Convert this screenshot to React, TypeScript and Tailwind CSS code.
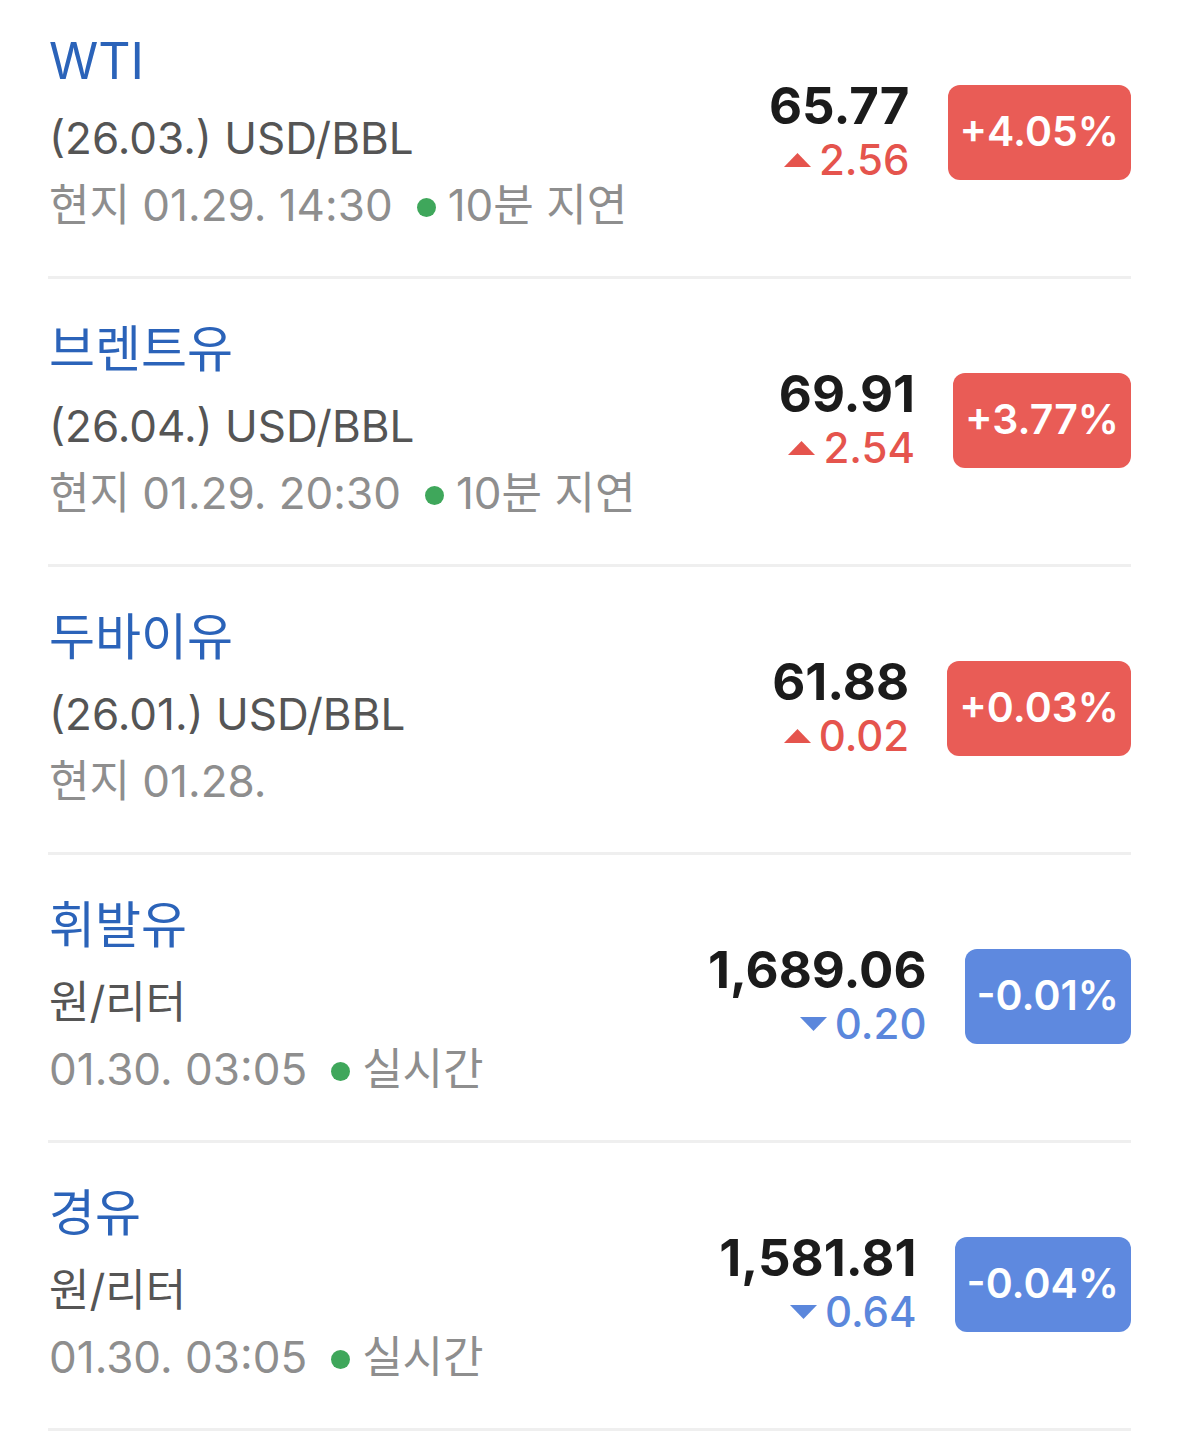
import React from "react";

type Item = {
  name: string;
  unit: string;
  time: string;
  status?: string;
  price: string;
  change: string;
  pct: string;
  up: boolean;
};

const items: Item[] = [
  { name: "WTI", unit: "(26.03.) USD/BBL", time: "현지 01.29. 14:30", status: "10분 지연", price: "65.77", change: "2.56", pct: "+4.05%", up: true },
  { name: "브렌트유", unit: "(26.04.) USD/BBL", time: "현지 01.29. 20:30", status: "10분 지연", price: "69.91", change: "2.54", pct: "+3.77%", up: true },
  { name: "두바이유", unit: "(26.01.) USD/BBL", time: "현지 01.28.", price: "61.88", change: "0.02", pct: "+0.03%", up: true },
  { name: "휘발유", unit: "원/리터", time: "01.30. 03:05", status: "실시간", price: "1,689.06", change: "0.20", pct: "-0.01%", up: false },
  { name: "경유", unit: "원/리터", time: "01.30. 03:05", status: "실시간", price: "1,581.81", change: "0.64", pct: "-0.04%", up: false },
];

function Row({ it }: { it: Item }) {
  return (
    <div className="flex items-center justify-between pt-[34px] pb-[37px] border-b-[3px] border-[#efefef]">
      <div className="flex flex-col pl-[1px]">
        <div className="text-[50px] leading-[72px] text-[#2b63b9]">{it.name}</div>
        <div className="mt-[8px] text-[44px] leading-[67px] text-[#555555]">{it.unit}</div>
        <div className="flex items-center text-[44px] leading-[67px] text-[#8e8e8e]">
          <span>{it.time}</span>
          {it.status && (
            <>
              <span className="ml-[24px] mr-[12px] mt-[4px] inline-block w-[19px] h-[19px] rounded-full bg-[#3fa75b]" />
              <span>{it.status}</span>
            </>
          )}
        </div>
      </div>
      <div className="flex items-center gap-[38px]">
        <div className="flex flex-col items-end">
          <div className="text-[51px] leading-[56px] font-bold text-[#1b1b1b]">{it.price}</div>
          <div className={`flex items-center text-[42px] leading-[52px] font-medium ${it.up ? "text-[#e5544d]" : "text-[#5b87dc]"}`}>
            <svg width="27" height="16" viewBox="0 0 27 16" className="mr-[8px]">
              {it.up ? (
                <polygon points="13.5,1 27,15 0,15" fill={"#e5544d"} />
              ) : (
                <polygon points="0,1 27,1 13.5,15" fill={"#5b87dc"} />
              )}
            </svg>
            <span>{it.change}</span>
          </div>
        </div>
        <div className={`flex items-center justify-center h-[95px] px-[12px] rounded-[12px] text-white text-[41px] font-semibold ${it.up ? "bg-[#e95c56]" : "bg-[#5e89df]"}`}>
          {it.pct}
        </div>
      </div>
    </div>
  );
}

export default function App() {
  return (
    <div
      className="w-[1179px] h-[1443px] bg-white overflow-hidden"
      style={{ fontFamily: 'Inter, "Noto Sans CJK KR", sans-serif' }}
    >
      <div className="-mt-[9px] px-[48px]">
        {items.map((it) => (
          <Row key={it.name} it={it} />
        ))}
      </div>
    </div>
  );
}
